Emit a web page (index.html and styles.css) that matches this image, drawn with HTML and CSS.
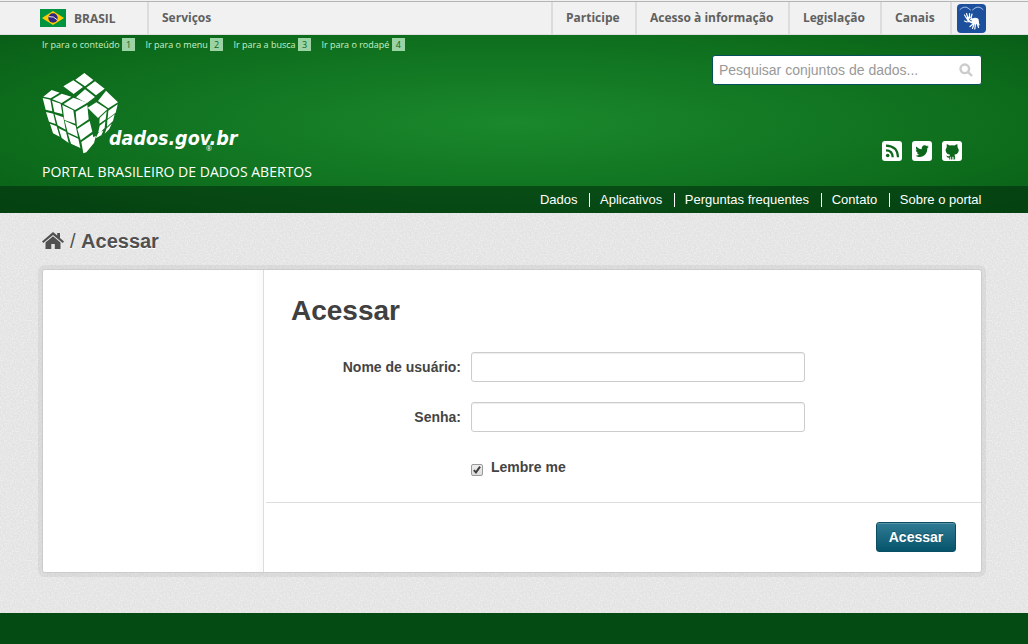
FILE: index.html
```html
<!DOCTYPE html>
<html lang="pt-BR">
<head>
<meta charset="utf-8">
<title>Acessar - Portal Brasileiro de Dados Abertos</title>
<link rel="stylesheet" href="styles.css">
</head>
<body>
<div class="gov-bar">
  <a class="brasil"><svg class="flag" viewBox="0 0 26 18"><path fill="#009440" d="M0 0h26v18H0z"/><path fill="#ffcb00" d="M13 2l11 7-11 7L2 9z"/><circle cx="13" cy="9" r="4.7" fill="#302681"/><path d="M8.7 7.6q5-.7 8.6 3.2" fill="none" stroke="#fff" stroke-width=".9"/></svg><span>BRASIL</span></a>
  <a class="servicos">Serviços</a>
  <nav class="gov-links"><a class="g1">Participe</a><a class="g2">Acesso à informação</a><a class="g3">Legislação</a><a class="g4">Canais</a></nav>
  <div class="vlibras"><svg viewBox="0 0 29 29"><g fill="none" stroke="#fff" stroke-linecap="round"><path d="M3 5.500q4-4 8-1.500l2.500 2M15.500 6l2.500-2q4-2.500 8 1.500" stroke-width="1" stroke="#a9c0e8"/><path d="M10 15L7.500 11M11 14L9.500 9.500M12.500 13l0-3.500M14 14l1-4M10 18l-2.500-1M16 20l-3 2.500M17 20l-1.500 4.500M18.500 20l-.7 5M20 19l1.500 4.500M21 18l1 3" stroke-width="1.200"/></g><path d="M9.500 13l3.500-.5 2 2q4-1.500 6.500.5l.5 3.500-3 2-3-.5-3-1.500-2.500-.5z" fill="#fff"/><path d="M14 14q-2.500.5-1 2.500l2 .5" fill="none" stroke="#1c4f9c" stroke-width=".8"/></svg></div>
</div>
<header class="header">
  <div class="head-main">
    <div class="head-left">
      <div class="skip"><a>Ir para o conteúdo <b>1</b></a><a>Ir para o menu <b>2</b></a><a>Ir para a busca <b>3</b></a><a>Ir para o rodapé <b>4</b></a></div>
      <div class="logo">
        <svg class="cube" viewBox="18 12 231 246" fill="#fff">
          <path d="M145 15l27 21-25 19-29-20zM112 37l29 20-28 21-31-23zM177 40l29 22-26 20-29-23zM147 64l30 23-24 18-14-7-19-10zM210 68l36 35-29 18-31-22z"/>
          <path d="M181 103l33 21-28 26-31-31z"/>
          <path d="M22 86l25-20 24 8-27 17zM49 94l28-17 29 9-29 19zM83 108l29-19 42 15-37 22z"/>
          <path d="M20 90l23 5 6 35-20-5zM48 98l26 9 5 31-24-6zM79 111l33 16 6 40-33-11zM119 131l35-20 4 43-35 24zM30 132l22 5 7 31-20-7zM56 139l26 9 7 37-24-13zM86 158l33 15 7 34-31-14zM124 183l37-24 8 32-35 26zM42 167l20 8 9 31-20-10zM68 181l22 10 8 34-21-15zM96 198l31 14 6 28-28-13zM136 222l34-23 2 9 8-5-6 22-23 28-9 3z"/>
          <path d="M217 128l28-19-6 25-24 18zM212 130l-3 24-19 13 1-17zM236 139l-5 20-18 17 1-20zM208 160l-2 20-14 14-5-2 4-19zM227 167l-7 16-14 14 6-16zM202 188l-6 14-17 9 8-17z"/>
        </svg><span class="logo-text">dados.gov.br</span><span class="reg">®</span>
      </div>
      <div class="tagline">PORTAL BRASILEIRO DE DADOS ABERTOS</div>
    </div>
    <div class="head-right">
      <div class="search"><span>Pesquisar conjuntos de dados...</span><svg viewBox="0 0 14 14"><circle cx="5.800" cy="5.800" r="4.300"/><path d="M9 9l4 4"/></svg></div>
      <div class="social">
        <svg viewBox="0 0 20 20"><rect width="20" height="20" rx="3" fill="#fff"/><g fill="none" stroke="#0c661b" stroke-width="2.200"><path d="M4 9.300q6.500 0 6.700 7M4 4.700q11.500.3 12 11.600"/></g><circle cx="5.700" cy="14.500" r="1.800" fill="#0c661b"/></svg>
        <svg viewBox="0 0 20 20"><rect width="20" height="20" rx="3" fill="#fff"/><path fill="#0c661b" d="M17 5.700l-1.700 1.600C15.600 12.500 12 16 7.900 16c-1.600 0-3-.4-4.300-1.300 1.400.1 2.700-.3 3.800-1.100-1.200 0-2.100-.8-2.500-1.900h1.200C4.800 11.400 3.900 10.300 3.900 9l1.200.3C3.900 8.300 3.600 6.900 4.300 5.600 5.700 7.300 7.700 8.200 9.800 8.300 9.300 6.200 10.700 4.200 12.700 4.200c.8 0 1.500.3 2 .9l1.800-.7-1.200 1.600z"/></svg>
        <svg viewBox="0 0 20 20"><rect width="20" height="20" rx="3" fill="#fff"/><path fill="#0c661b" d="M4.800 3l3 1.500q2.200-.5 4.500 0l3-1.500.3 3.200q1.700 2 .7 5-.9 2.200-4 2.600l.8 1.500v3.200h-1v-2.700h-.6v2.700h-.9v-2.700h-.7v2.700h-.9v-2.700h-.7v2.700h-1v-1.800q-2.600.3-3-2.500 1.300 1.500 3 1l.8-1.400q-3.200-.5-4-2.600-1-3 .6-5z"/></svg>
      </div>
    </div>
  </div>
  <nav class="main-nav"><a>Dados</a><a>Aplicativos</a><a>Perguntas frequentes</a><a>Contato</a><a>Sobre o portal</a></nav>
</header>
<main class="main">
  <div class="crumb"><svg viewBox="0 0 22 18"><path fill="#505050" d="M11 4.300l7.500 6.200V17h-5.700v-5H9.300v5H3.500v-6.500zM11 0l4.200 3.500V1H18v5l4 3.400-1.300 1.500L11 3.100 1.300 10.900 0 9.400z"/></svg><span>/</span><b>Acessar</b></div>
  <section class="panel">
    <aside class="side"></aside>
    <form class="form">
      <h1>Acessar</h1>
      <div class="row"><label for="user">Nome de usuário:</label><input id="user" type="text"></div>
      <div class="row"><label for="pass">Senha:</label><input id="pass" type="password"></div>
      <div class="remember"><span class="check"><svg viewBox="0 0 12 12"><path d="M2.200 6.200l2.500 2.600 5-6.800" fill="none" stroke="#404040" stroke-width="2.400"/></svg></span><label>Lembre me</label></div>
      <div class="actions"><button type="button">Acessar</button></div>
    </form>
  </section>
</main>
<footer class="footer"></footer>
</body>
</html>
```
FILE: styles.css
```css
* { box-sizing: border-box; }
body { margin: 0; height: 644px; overflow: hidden; display: flex; flex-direction: column; font: 14px/20px "Liberation Sans", Arial, sans-serif; color: #444; background: #034a13; }
svg { display: block; flex: none; }

.gov-bar { height: 35px; flex: none; display: flex; background: #f1f1f1; box-shadow: inset 0 1px #f1f1f1, inset 0 2px #b3b5b3, inset 0 -1px #dfdfdf; font: bold 12px/33px "Open Sans", sans-serif; color: #606060; padding: 2px 42px 0 40px; }
.brasil { width: 109px; display: flex; border-right: 2px solid #dcdcdc; }
.flag { width: 26px; height: 18px; margin: 7px 8px 0 0; }
.brasil span { line-height: 34px; }
.servicos { padding-left: 13px; line-height: 32px; }
.gov-links { margin-left: auto; display: flex; border-right: 2px solid #dcdcdc; line-height: 32px; }
.gov-links a { border-left: 2px solid #dcdcdc; padding-left: 13px; white-space: nowrap; }
.g1 { width: 84px; }
.g2 { width: 153px; }
.g3 { width: 92px; }
.g4 { width: 70px; }
.vlibras { width: 29px; height: 29px; margin: 2px 0 0 5px; background: #1c4f9c; border-radius: 4px; }

.header { height: 178px; flex: none; background: radial-gradient(ellipse 780px 150px at 514px 88px, #1a882c 0%, #0d6c1c 65%, #075715 100%); }
.head-main { height: 151px; display: flex; justify-content: space-between; padding: 0 46px 0 42px; }
.skip { display: flex; gap: 10.4px; height: 20px; padding-top: 3px; font: 9px/13px "Open Sans", sans-serif; color: #c5f3c8; white-space: nowrap; }
.skip a { display: flex; gap: 2.400px; }
.skip b { width: 13px; height: 13px; background: #9bd3a4; color: #0c661b; text-align: center; font-weight: 400; }
.logo { position: relative; height: 101px; display: flex; padding-top: 17px; }
.cube { width: 77px; height: 82px; }
.logo-text { margin: 53px 0 0 -10px; font: italic bold 19.5px/28px "DejaVu Sans Condensed", "DejaVu Sans", sans-serif; font-stretch: condensed; color: #fff; height: 28px; }
.reg { position: absolute; left: 164px; top: 90px; font: 7px/8px "Open Sans", sans-serif; color: #fff; }
.tagline { font: 14px/20px "Open Sans", sans-serif; letter-spacing: .02px; color: #fff; margin-top: 6px; white-space: nowrap; }
.head-right { width: 270px; padding-top: 20px; }
.search { height: 30px; display: flex; align-items: center; justify-content: space-between; padding: 0 8px 0 6px; background: #fff; border: 1px solid #06505c; border-radius: 3px; color: #999; white-space: nowrap; }
.search svg { width: 14px; height: 14px; fill: none; stroke: #ccc; stroke-width: 2.4; }
.social { display: flex; justify-content: flex-end; gap: 10px; padding: 56px 20px 0 0; }
.social svg { width: 20px; height: 20px; }
.main-nav { height: 27px; display: flex; align-items: center; justify-content: flex-end; padding-right: 46.5px; background: rgba(2, 42, 12, .55); color: #fff; font-size: 13px; }
.main-nav a { line-height: 14px; padding-left: 10px; }
.main-nav a:not(:last-child) { padding-right: 11.6px; border-right: 1px solid #fff; }

.main { height: 400px; flex: none; padding: 17px 46px 0 42px; background: #e9e9e9 url("data:image/svg+xml,%3Csvg xmlns='http://www.w3.org/2000/svg' width='120' height='120'%3E%3Cfilter id='n'%3E%3CfeTurbulence type='fractalNoise' baseFrequency='.65' numOctaves='2' stitchTiles='stitch'/%3E%3CfeColorMatrix type='matrix' values='0 0 0 0 1 0 0 0 0 1 0 0 0 0 1 2 0 0 0 -.8'/%3E%3C/filter%3E%3Crect width='120' height='120' fill='%23e3e3e3'/%3E%3Crect width='120' height='120' filter='url(%23n)' opacity='.5'/%3E%3C/svg%3E"); }
.crumb { height: 22px; display: flex; align-items: center; font-size: 20px; color: #505050; text-shadow: 0 1px #fff; }
.crumb svg { width: 22px; height: 18px; margin-right: 6px; }
.crumb span { margin-right: 5.5px; }
.panel { height: 304px; margin-top: 17px; display: flex; background: #fff; border: 1px solid #ccc; border-radius: 3px; box-shadow: 0 0 0 4px rgba(0, 0, 0, .05); }
.side { width: 221px; border-right: 1px solid #ddd; background: linear-gradient(90deg, #fff 96%, #fafafa); border-radius: 3px 0 0 3px; }
.form { flex: 1; padding: 25px 0 0 2px; }
.form h1 { margin: 0 0 25px 25px; font-size: 28px; line-height: 32px; color: #404040; }
.row { display: flex; align-items: center; height: 30px; margin-bottom: 20px; }
.row label { width: 195px; text-align: right; margin-right: 10px; font-weight: bold; }
.row input { width: 334px; height: 30px; border: 1px solid #ccc; border-radius: 3px; box-shadow: inset 0 1px 1px rgba(0, 0, 0, .075); background: #fff; }
.remember { display: flex; height: 50px; padding: 5px 0 0 205px; font-weight: bold; }
.check { width: 12px; height: 12px; margin: 7px 8px 0 0; border: 1px solid #999; border-radius: 2px; background: linear-gradient(#eee, #ddd); }
.check svg { width: 10px; height: 10px; }
.actions { border-top: 1px solid #ddd; padding: 19px 25px 0 0; display: flex; justify-content: flex-end; }
.actions button { width: 80px; height: 30px; padding: 0; border: 1px solid #0b4e63; border-radius: 3px; background: linear-gradient(#2f7b93, #06546c); box-shadow: inset 0 1px rgba(255, 255, 255, .2); color: #fff; font: bold 14px/20px "Liberation Sans", Arial, sans-serif; text-shadow: 0 -1px rgba(0, 0, 0, .25); }
.footer { flex: 1; background: #034a13; }
```
